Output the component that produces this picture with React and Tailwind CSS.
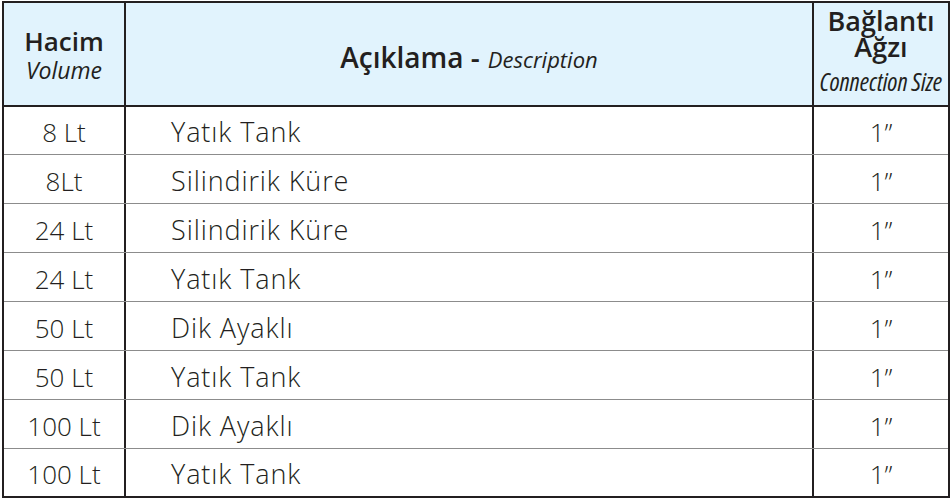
import React from "react";

const rows = [
  ["8 Lt", "Yatık Tank"],
  ["8Lt", "Silindirik Küre"],
  ["24 Lt", "Silindirik Küre"],
  ["24 Lt", "Yatık Tank"],
  ["50 Lt", "Dik Ayaklı"],
  ["50 Lt", "Yatık Tank"],
  ["100 Lt", "Dik Ayaklı"],
  ["100 Lt", "Yatık Tank"],
];

const heights = ["h-[48px]", "h-[49px]", "h-[49px]", "h-[49px]", "h-[49px]", "h-[49px]", "h-[49px]", "h-[47px]"];

export default function App() {
  return (
    <div className="w-[951px] h-[499px] bg-white pt-[1px] pl-[2px] text-[#231f20]" style={{ fontFamily: "'Open Sans', Roboto, sans-serif" }}>
      <div className="w-[948px] border-2 border-[#231f20]">
        <div className="grid grid-cols-[122px_688px_134px] h-[104px] bg-[#e1f3fd] border-b-2 border-[#231f20]">
          <div className="border-r-2 border-[#231f20] flex flex-col items-center justify-start pt-[23px]">
            <span className="text-[26px] font-semibold leading-[30px]">Hacim</span>
            <span className="text-[23px] italic leading-[28px]">Volume</span>
          </div>
          <div className="border-r-2 border-[#231f20] flex items-baseline justify-center pt-[39px]">
            <span className="text-[28px] font-semibold leading-[30px]">Açıklama -</span>
            <span className="text-[22px] italic ml-[8px] leading-[30px]">Description</span>
          </div>
          <div className="flex flex-col items-center justify-start pt-[5px]">
            <span className="text-[27px] font-semibold leading-[26px]">Bağlantı</span>
            <span className="text-[27px] font-semibold leading-[26px]">Ağzı</span>
            <span className="text-[25px] italic leading-[30px] mt-[6px] whitespace-nowrap font-stretch-semi-condensed">Connection Size</span>
          </div>
        </div>
        {rows.map(([v, d], i) => (
          <div key={i} className={`grid grid-cols-[122px_688px_134px] ${heights[i]} ${i < 7 ? "border-b border-[#8c8c8c]" : ""}`}>
            <div className="border-r-2 border-[#231f20] flex items-center justify-center text-[26px] font-light pt-[4px]">{v}</div>
            <div className="border-r-2 border-[#231f20] flex items-center pl-[45px] text-[27px] tracking-[0.9px] font-light pt-[4px]">{d}</div>
            <div className="flex items-center justify-center text-[26px] font-light pt-[4px]">1”</div>
          </div>
        ))}
      </div>
    </div>
  );
}
